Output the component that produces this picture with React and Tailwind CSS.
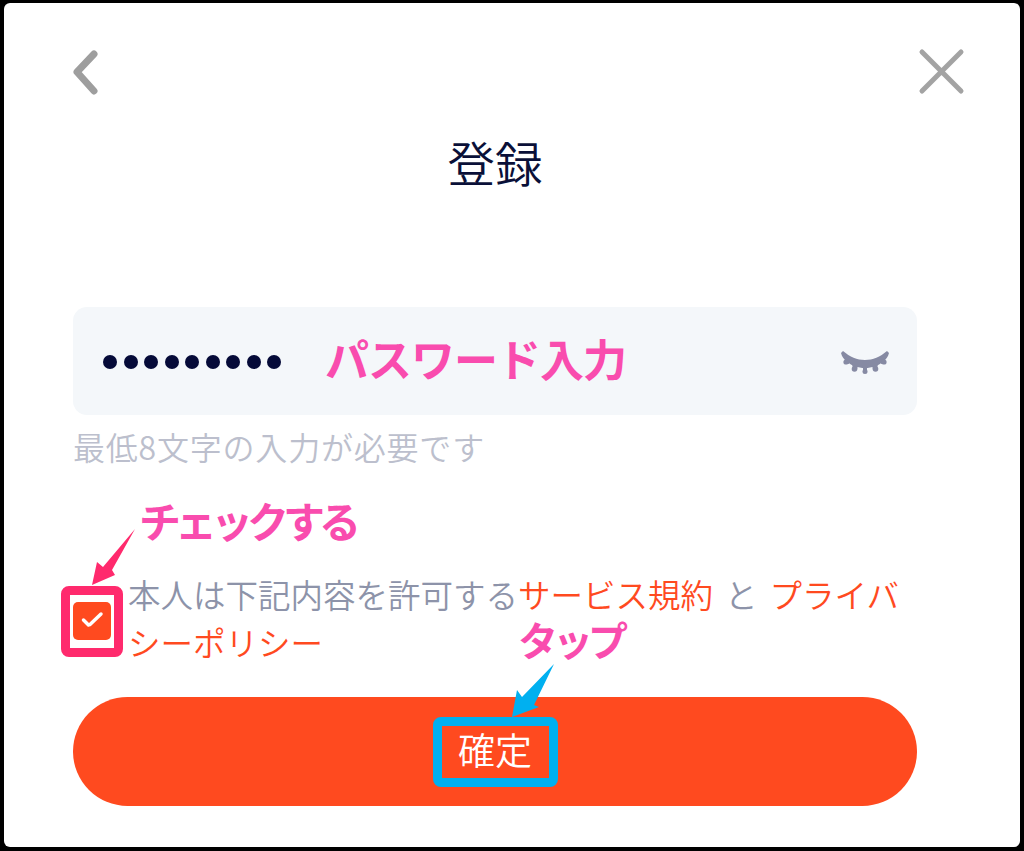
const font = { fontFamily: '"Noto Sans CJK JP", "Noto Sans", sans-serif' }

function ClosedEye() {
  return (
    <svg width="50" height="26" viewBox="0 0 50 26" className="shrink-0 text-[#868aa3]" fill="currentColor">
      <path d="M1 5 L3 3 C10 9 17 12 25 12 C33 12 40 9 47 3 L49 5 C48 9 46 11 44 13 C38 18 32 20 25 20 C18 20 12 18 6 13 C4 11 2 9 1 5 Z" />
      <path d="M5 11 L9 12 L9 16 L5 15 Z M12 15 L18 17 L17 22 L13 22 Z M23 17 L27 17 L27 24 L23 24 Z M32 17 L38 15 L37 22 L33 22 Z M41 12 L45 11 L45 15 L41 16 Z" />
      <circle cx="6" cy="14" r="2.6" />
      <circle cx="14.5" cy="21" r="2.8" />
      <circle cx="25" cy="23.5" r="2.5" />
      <circle cx="35.5" cy="21" r="2.8" />
      <circle cx="44" cy="14" r="2.6" />
    </svg>
  )
}

export default function App() {
  return (
    <div className="relative h-[851px] w-[1024px] overflow-hidden bg-black pt-[3px] pr-[4px] pb-[4px] pl-[4px]" style={font}>
      <div className="flex h-full w-full flex-col rounded-[6px] bg-white pt-[45px] pr-[103px] pl-[69px]">
        <div className="flex h-[48px] items-center justify-between">
          <svg width="28" height="48" viewBox="0 0 28 48" fill="none" stroke="#9e9e9e" strokeWidth="7" strokeLinecap="round" strokeLinejoin="round">
            <path d="M21 6 L4 24 L21 43" />
          </svg>
          <svg className="-mr-[49px]" width="48" height="48" viewBox="0 0 48 48" fill="none" stroke="#a3a3a3" strokeWidth="5" strokeLinecap="round">
            <path d="M4 4 L43 43 M43 4 L4 43" />
          </svg>
        </div>

        <h1 className="mt-[36px] mb-[2px] text-center text-[47.5px] leading-[60px] font-[350] text-[#0a1038]">登録</h1>

        <div className="mt-[113px] flex h-[108px] items-center rounded-[14px] bg-[#f4f7fa] pr-[27px] pl-[30px]">
          <div className="mt-[2px] flex gap-[6.5px]">
            {[0, 1, 2, 3, 4, 5, 6, 7, 8].map((i) => (
              <span key={i} className="h-[14px] w-[14px] rounded-full bg-[#050a38]" />
            ))}
          </div>
          <span className="mb-[6px] ml-[44px] flex-1 text-[44px] leading-none font-bold tracking-[-1px] text-[#f94cae]">パスワード入力</span>
          <ClosedEye />
        </div>

        <p className="mt-[11px] mb-[3px] text-[32px] leading-[40px] font-[350] tracking-[0.8px] text-[#bcbfcd]">最低8文字の入力が必要です</p>

        <div className="relative mt-[101px] mb-[1px] flex gap-[17px]">
          <div className="mt-[32px] flex h-[38px] w-[38px] shrink-0 items-center justify-center rounded-[5px] bg-[#ff4a1f]">
            <svg width="24" height="20" viewBox="0 0 24 20" fill="none" stroke="#fff" strokeWidth="3.5" strokeLinecap="round">
              <path d="M3.5 9 L8.5 14 M10 13.5 L21 3" />
            </svg>
          </div>
          <p className="text-[32.5px] leading-[48px] font-[350] text-[#8d93a9]">
            本人は下記内容を許可する<span className="text-[#ff4a1f]">サービス規約</span><span className="mx-[12px]">と</span><span className="text-[#ff4a1f]">プライバシーポリシー</span>
          </p>
        </div>

        <button className="mt-[30px] flex h-[109px] shrink-0 items-center justify-center rounded-full bg-[#ff4a1f] pb-[4px] text-[37px] font-[350] text-white">
          確定
        </button>
      </div>

      {/* annotations on top of the screen */}
      <div className="absolute top-[586px] left-[61px] h-[71px] w-[62px] rounded-[8px] border-[9px] border-[#ff2a6d]" />
      <div className="absolute top-[717px] left-[433px] h-[70px] w-[125px] rounded-[8px] border-[9px] border-[#00b0f0]" />
      <span className="absolute top-[499px] left-[139px] text-[42px] leading-none font-bold tracking-[-6px] text-[#f94cae]">チェックする</span>
      <span className="absolute top-[619px] left-[518px] text-[40px] leading-none font-bold tracking-[-5px] text-[#f94cae]">タップ</span>
      <svg className="absolute top-0 left-0" width="1024" height="851" viewBox="0 0 1024 851">
        <polygon points="135,529 112,570 115,575 92,585 97,562 103,567" fill="#ff2a6d" />
        <polygon points="554,664 534,705 539,707 512,717 517,690 522,697" fill="#00b0f0" />
      </svg>
    </div>
  )
}
